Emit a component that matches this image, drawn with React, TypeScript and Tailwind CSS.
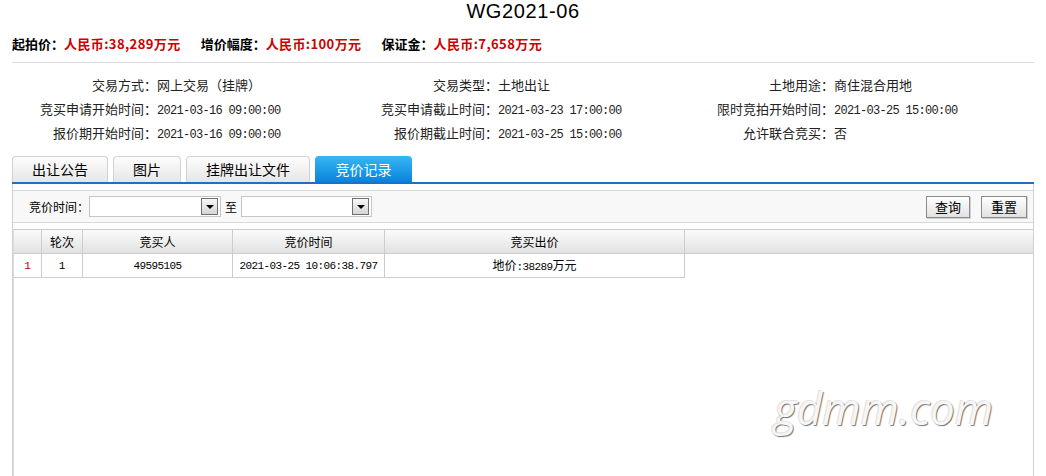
import React from "react";

// widths of the datagrid columns (row number, 轮次, 竞买人, 竞价时间, 竞买出价)
const cols = ["w-[28px]", "w-[41px]", "w-[150px]", "w-[152px]", "w-[300px]"];
const heads = ["", "轮次", "竞买人", "竞价时间", "竞买出价"];

const info: [string, string, boolean][][] = [
    [["交易方式", "网上交易（挂牌）", false], ["交易类型", "土地出让", false], ["土地用途", "商住混合用地", false]],
    [["竞买申请开始时间", "2021-03-16 09:00:00", true], ["竞买申请截止时间", "2021-03-23 17:00:00", true], ["限时竞拍开始时间", "2021-03-25 15:00:00", true]],
    [["报价期开始时间", "2021-03-16 09:00:00", true], ["报价期截止时间", "2021-03-25 15:00:00", true], ["允许联合竞买", "否", false]],
];

const tabs = [
    { name: "出让公告", width: "w-[96px]" },
    { name: "图片", width: "w-[68px]" },
    { name: "挂牌出让文件", width: "w-[124px]" },
    { name: "竞价记录", width: "w-[97px]", active: true },
];

const mono = "font-['Liberation_Mono',monospace]";

function Combo({ width }: { width: string }) {
    return (
        <div className={`${width} flex h-[21px] items-center justify-end border border-[#c6c6c6] bg-white pr-[2px]`}>
            <span className="flex h-[17px] w-[17px] items-center justify-center border border-[#707070] bg-linear-to-b from-[#f7f7f7] to-[#d6d6d6]">
                <span className="h-0 w-0 border-x-[4px] border-t-[4px] border-x-transparent border-t-black" />
            </span>
        </div>
    );
}

function ToolButton({ label, width }: { label: string; width: string }) {
    return (
        <button className={`${width} flex h-[22px] items-center justify-center border border-[#8a8a8a] bg-linear-to-b from-white to-[#e2e2e2] text-[13px] text-black shadow-[1px_1px_0_#d0d0d0]`}>
            {label}
        </button>
    );
}

export default function App() {
    return (
        <div className="relative h-[476px] overflow-hidden bg-white font-['Noto_Sans_CJK_SC','Noto_Sans',sans-serif] text-[#222]">
            <div className="flex h-full flex-col px-3">
                <h1 className="h-[22px] text-center font-['Liberation_Sans',sans-serif] text-[20px] leading-[22px] tracking-[0.6px] text-black">
                    WG2021-06
                </h1>

                {/* 价格摘要 */}
                <div className="mt-[12px] flex h-5 gap-[20px] text-[13px] font-bold leading-5 text-black">
                    <span>起拍价：<span className="tracking-[0.4px] text-[#cc0000]">人民币:38,289万元</span></span>
                    <span>增价幅度：<span className="tracking-[0.4px] text-[#cc0000]">人民币:100万元</span></span>
                    <span>保证金：<span className="tracking-[0.4px] text-[#cc0000]">人民币:7,658万元</span></span>
                </div>

                <div className="mt-2 border-t border-[#dddddd]" />

                {/* 交易信息 */}
                <div className="mt-[10px] grid grid-cols-[145px_196px_145px_191px_145px_1fr] text-[13px]">
                    {info.map((row) =>
                        row.map(([label, value, isDate]) => (
                            <React.Fragment key={label}>
                                <div className="h-6 text-right leading-6">{label}：</div>
                                <div className={isDate ? `${mono} h-6 pt-[2px] text-[12px] leading-6 tracking-[-0.7px]` : "h-6 leading-6"}>{value}</div>
                            </React.Fragment>
                        ))
                    )}
                </div>

                {/* 标签页 */}
                <div className="mt-[11px] flex h-[26px] items-end gap-[5px]">
                    {tabs.map((tab) => (
                        <div
                            key={tab.name}
                            className={
                                tab.active
                                    ? `${tab.width} flex h-[26px] items-center justify-center rounded-t-[4px] bg-linear-to-b from-[#35b8f2] to-[#0a82dd] text-[14px] text-white`
                                    : `${tab.width} flex h-[26px] items-center justify-center rounded-t-[4px] border border-b-0 border-[#d2d2d2] bg-linear-to-b from-[#fdfdfd] to-[#e6e6e6] text-[14px] text-black`
                            }
                        >
                            {tab.name}
                        </div>
                    ))}
                </div>
                <div className="h-[2px] bg-[#1f6fc5]" />

                <div className="flex flex-1 flex-col border-x border-[#d0d0d0] pt-[6px]">
                    {/* 查询条件 */}
                    <div className="flex h-[33px] items-center border-y border-[#d8d8d8] bg-[#f8f8f8] pl-4 pr-[6px] text-[12px] text-black">
                        <span>竞价时间：</span>
                        <Combo width="w-[132px]" />
                        <span className="mx-[4px]">至</span>
                        <Combo width="w-[131px]" />
                        <div className="ml-auto flex gap-[11px]">
                            <ToolButton label="查询" width="w-[44px]" />
                            <ToolButton label="重置" width="w-[46px]" />
                        </div>
                    </div>

                    {/* 竞价记录表 */}
                    <div className="mt-[6px] flex-1 border-l border-[#dddddd]">
                        <div className="flex h-[25px] border-y border-[#cccccc] bg-linear-to-b from-[#fbfbfb] to-[#e2e2e2] text-[12px] text-black">
                            {heads.map((h, i) => (
                                <div key={i} className={`${cols[i]} flex items-center justify-center border-r border-[#cccccc]`}>
                                    {h}
                                </div>
                            ))}
                            <div className="flex-1" />
                        </div>
                        <div className="flex h-[24px] w-fit text-[12px] text-black">
                            <div className={`${cols[0]} ${mono} flex items-center justify-center border-r border-b border-[#cccccc] pt-px text-[11px] text-[#b00000]`}>1</div>
                            <div className={`${cols[1]} ${mono} flex items-center justify-center border-r border-b border-[#cccccc] pt-px text-[11px]`}>1</div>
                            <div className={`${cols[2]} ${mono} flex items-center justify-center border-r border-b border-[#cccccc] pt-px text-[11px] tracking-[-0.6px]`}>49595105</div>
                            <div className={`${cols[3]} ${mono} flex items-center justify-center border-r border-b border-[#cccccc] pt-px text-[11px] tracking-[-0.6px]`}>2021-03-25 10:06:38.797</div>
                            <div className={`${cols[4]} flex items-center justify-center border-r border-b border-[#cccccc]`}>
                                <span>
                                    地价<span className={`${mono} text-[11px] tracking-[-0.6px]`}>:38289</span>万元
                                </span>
                            </div>
                        </div>
                    </div>
                </div>
            </div>

            {/* 水印 */}
            <div className="pointer-events-none absolute left-[774px] top-[387px] font-['Open_Sans',sans-serif] text-[44px] font-normal italic leading-[43px] text-[#f6f6f6] [text-shadow:1px_1px_1px_rgba(0,0,0,0.55),-1px_-1px_0_#e4e4e4]">
                gdmm.com
            </div>
        </div>
    );
}
